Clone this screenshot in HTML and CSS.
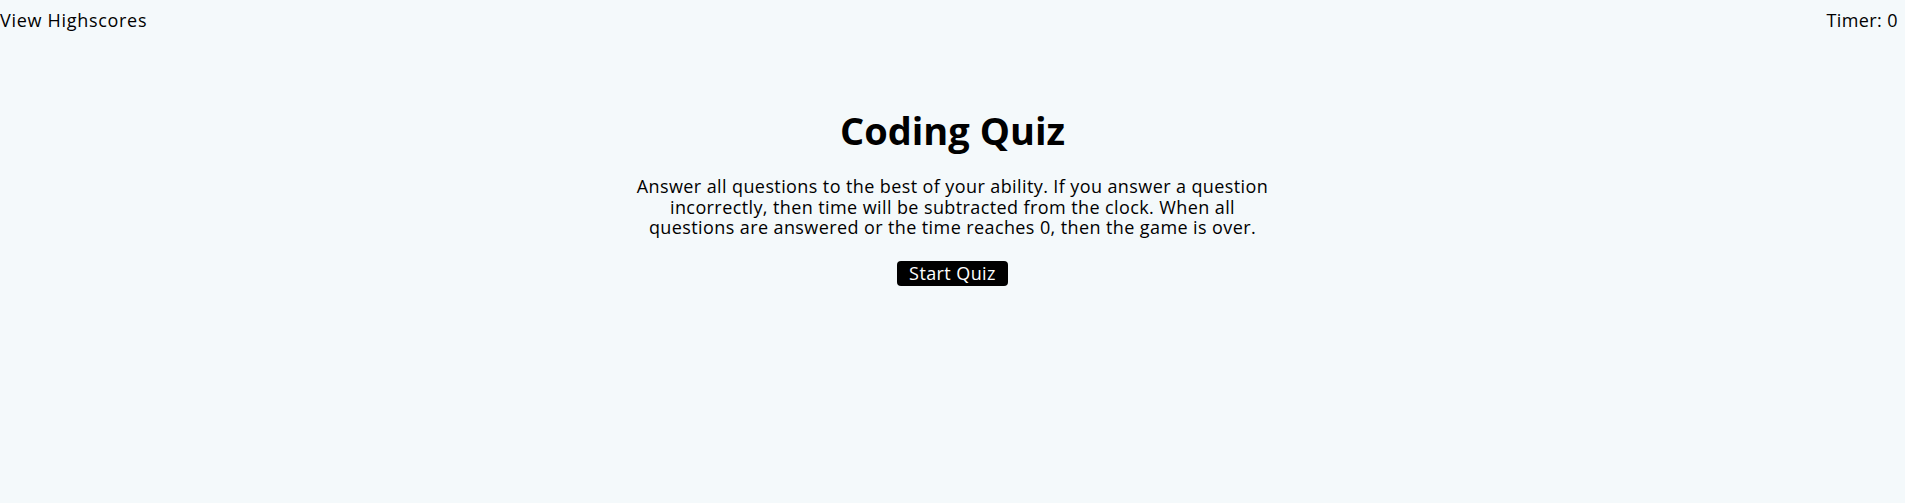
FILE: index.html
```html
<!DOCTYPE html>
<html lang="en">
<head>
<meta charset="utf-8">
<title>Coding Quiz</title>
<link rel="stylesheet" href="styles.css">
</head>
<body>
<header class="topbar">
  <a class="highscores" href="#">View Highscores</a>
  <div class="timer">Timer: <span>0</span></div>
</header>
<main class="quiz">
  <h1 class="title">Coding Quiz</h1>
  <p class="intro">Answer all questions to the best of your ability. If you answer a question incorrectly, then time will be subtracted from the clock. When all questions are answered or the time reaches 0, then the game is over.</p>
  <button class="start" type="button">Start Quiz</button>
</main>
</body>
</html>
```
FILE: styles.css
```css
html, body {
  margin: 0;
  padding: 0;
  background: #f4f9fb;
  color: #000;
  font-family: "Open Sans", "DejaVu Sans", sans-serif;
  font-size: 18px;
  letter-spacing: 0.4px;
}
.topbar {
  display: flex;
  justify-content: space-between;
  align-items: center;
  padding: 10px 7px 0 0;
  line-height: 21px;
}
.highscores {
  color: #000;
  text-decoration: none;
  letter-spacing: 0.7px;
}
.quiz {
  display: flex;
  flex-direction: column;
  align-items: center;
  text-align: center;
  padding-top: 76px;
}
.title {
  margin: 0;
  font-size: 38px;
  font-weight: 700;
  line-height: 46px;
  letter-spacing: 0;
}
.intro {
  max-width: 640px;
  margin: 23px 0 0;
  line-height: 20.5px;
}
.start {
  margin-top: 23px;
  font-family: inherit;
  font-size: 18px;
  letter-spacing: 0.4px;
  color: #fff;
  background: #000;
  border: none;
  border-radius: 4px;
  padding: 0 12px;
  height: 25px;
  line-height: 25px;
}
```
